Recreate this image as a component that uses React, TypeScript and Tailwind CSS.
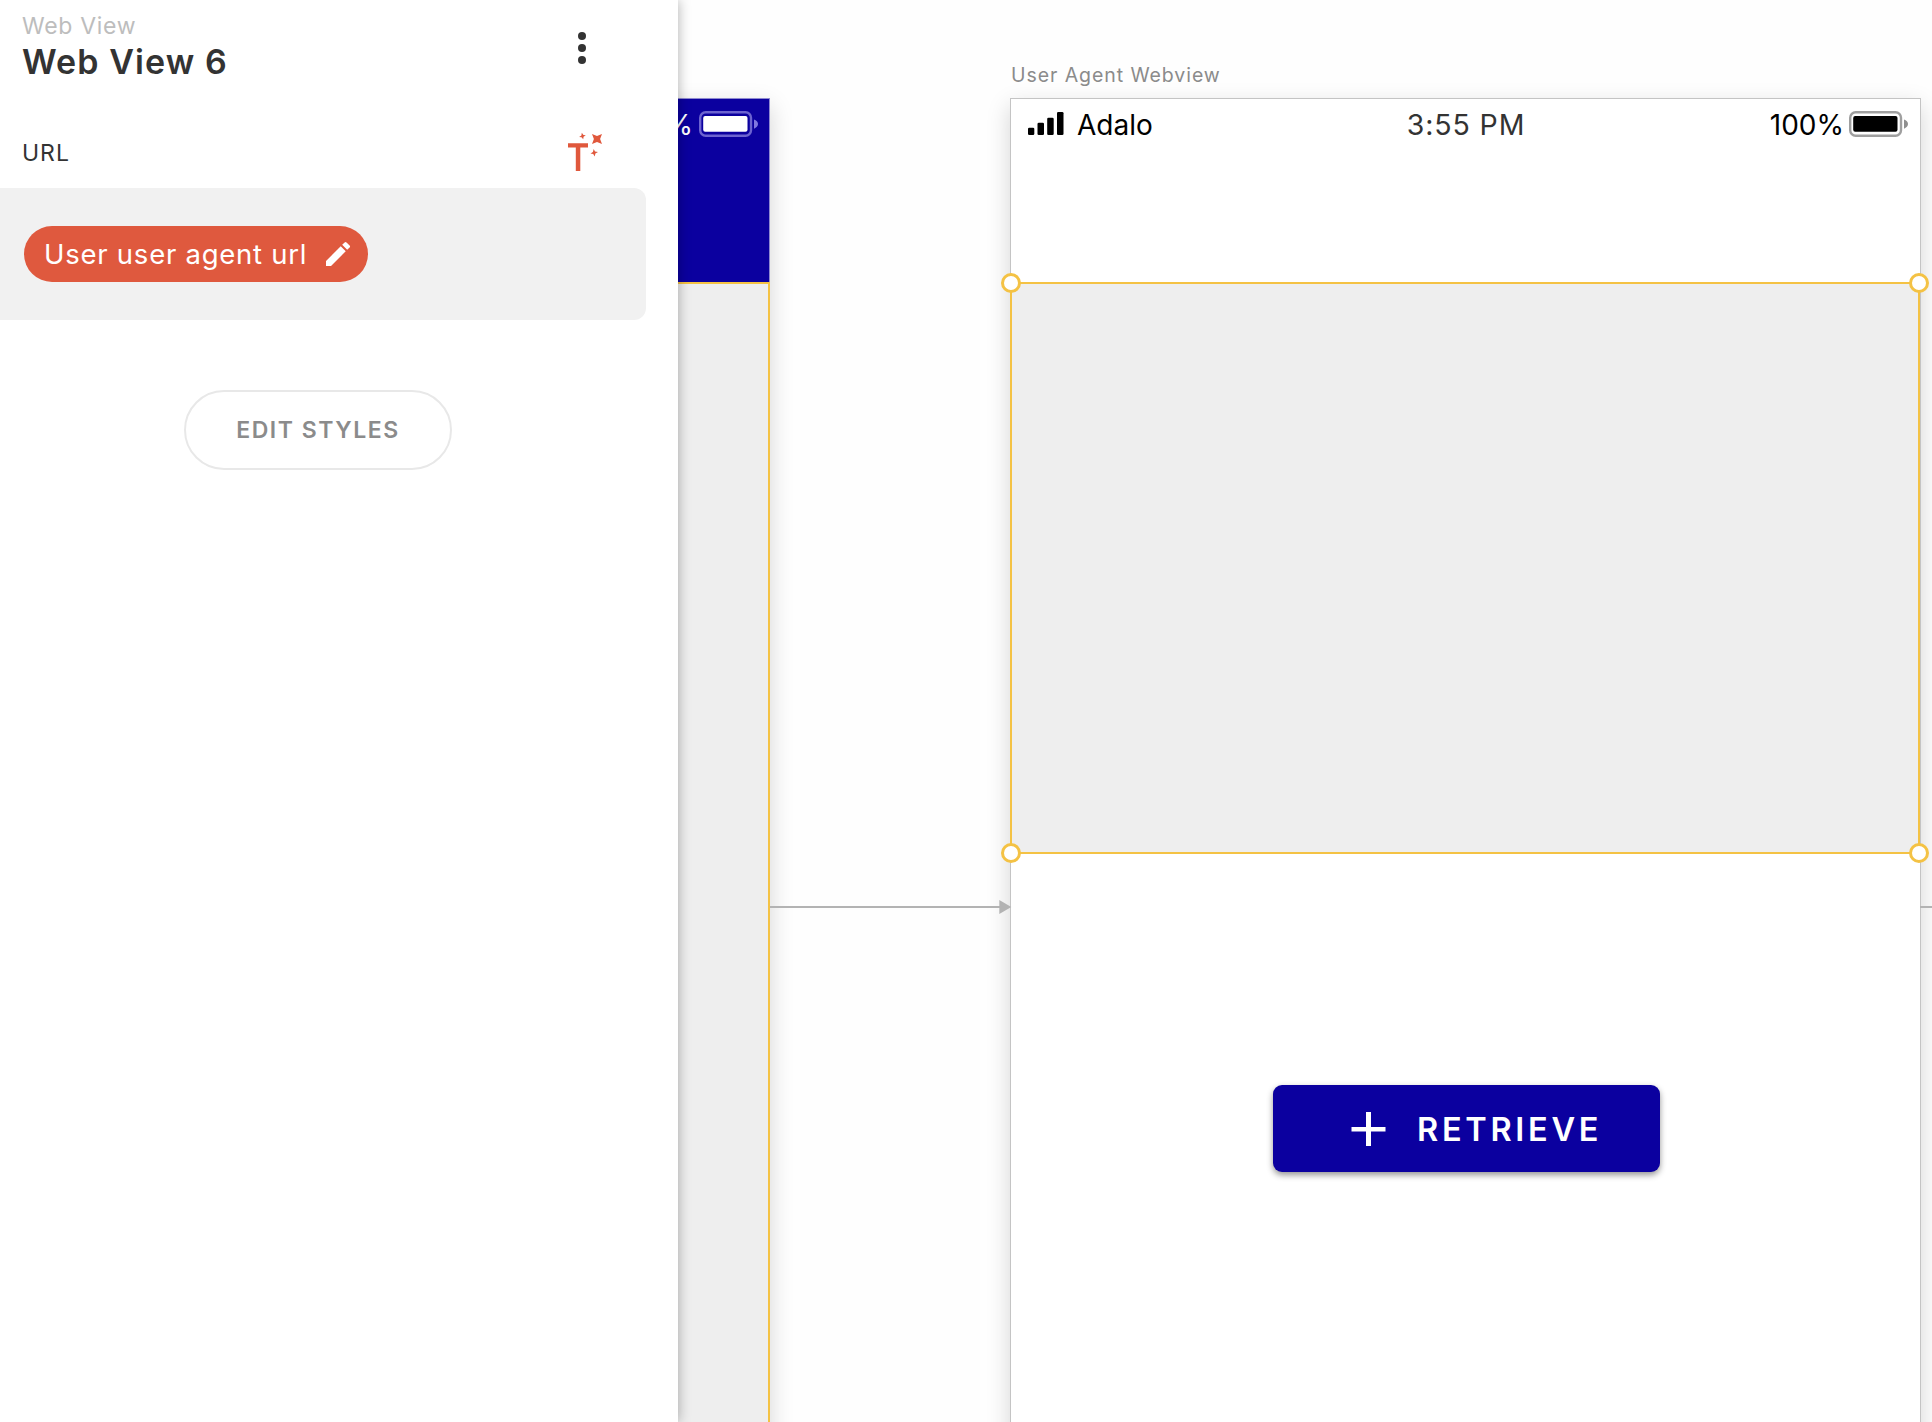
function Battery({ light = false }: { light?: boolean }) {
  const body = light ? "#ffffff" : "#000000";
  const rim = light ? "#6c63d0" : "#9f9f9f";
  const nub = light ? "#8078e0" : "#8f8f8f";
  return (
    <svg className="block shrink-0" width="60" height="26" viewBox="0 0 60 26">
      <rect x="1.2" y="1.2" width="50.8" height="23.6" rx="5.5" fill="none" stroke={rim} strokeWidth="2.4" />
      <rect x="4.2" y="5" width="44.3" height="15.8" rx="2" fill={body} />
      <path d="M55 8.5c2.4.8 4 2.500 4 4.600s-1.600 3.800-4 4.600z" fill={nub} />
    </svg>
  );
}

function Signal() {
  return (
    <svg className="mt-px block shrink-0" width="36" height="24" viewBox="0 0 36 24" fill="#000">
      <rect x="0" y="15.700" width="6.300" height="7.300" rx="1.300" />
      <rect x="9.500" y="10.700" width="6.500" height="12.300" rx="1.300" />
      <rect x="19.200" y="5.700" width="6.500" height="17.300" rx="1.300" />
      <rect x="29" y="0" width="6.500" height="23" rx="1.300" />
    </svg>
  );
}

function MagicText() {
  return (
    <svg className="block" width="36" height="40" viewBox="0 0 36 40" fill="#e0583c">
      <path d="M0 11.300h20v4.200h-7.700V39H7.800V15.500H0z" />
      <path d="M24 2l5 1.900L34 2l-1.900 5 1.900 5-5-1.900-5 1.900 1.900-5z" />
      <path d="M13.800.8l1.700 2.300 2.300.2-2.200 1.500-.4 2.400-1.700-2-2.400-.3 2.300-1.500z" />
      <path d="M25.700 17l1.300 2.600 3 .500-2.600 1.500-.7 2.800-1.500-2.500-2.700-.5 2.400-1.500z" />
    </svg>
  );
}

function Panel() {
  return (
    <aside className="relative z-10 h-full w-[678px] shrink-0 bg-white shadow-[0_0_12px_rgba(0,0,0,0.32)]">
      <header className="flex justify-between pt-[14px] pr-[84px] pl-[22px]">
        <div>
          <div className="text-[23px] leading-6 tracking-[0.700px] text-[#bdbdbd]">Web View</div>
          <h1 className="mt-1 text-[34px] leading-10 font-semibold tracking-[1.100px] text-[#333]">Web View 6</h1>
        </div>
        <svg className="mt-[14px] block" width="24" height="40" viewBox="0 0 24 40" fill="#333">
          <circle cx="12" cy="8" r="4" />
          <circle cx="12" cy="20" r="4" />
          <circle cx="12" cy="32" r="4" />
        </svg>
      </header>
      <div className="mt-[50px] flex h-10 items-center justify-between pr-[74px] pl-[22px]">
        <span className="pt-px text-[23px] leading-7 tracking-[1px] text-[#333]">URL</span>
        <MagicText />
      </div>
      <div className="mt-4 flex h-[132px] w-[646px] items-center rounded-r-[12px] bg-[#f1f1f1] pl-6">
        <div className="flex h-14 w-[344px] items-center justify-between rounded-full bg-[#df593e] pr-[14px] pl-5">
          <span className="text-[27.5px] leading-8 tracking-[0.750px] whitespace-nowrap text-white">User user agent url</span>
          <svg className="block" width="32" height="32" viewBox="0 0 24 24" fill="#fff">
            <path d="M3 17.250V21h3.750L17.810 9.940l-3.750-3.750L3 17.250zM20.710 7.040a.996.996 0 0 0 0-1.410l-2.340-2.340a.996.996 0 0 0-1.410 0l-1.830 1.830 3.750 3.750 1.830-1.830z" />
          </svg>
        </div>
      </div>
      <button className="mt-[70px] ml-[184px] flex h-20 w-[268px] items-center justify-center rounded-full border-2 border-[#e8e8e8] text-[23px] leading-8 font-semibold tracking-[1.55px] text-[#8b8b8b]">
        EDIT STYLES
      </button>
    </aside>
  );
}

function Handle({ place }: { place: string }) {
  return <span className={`absolute size-5 rounded-full border-3 border-[#f4c244] bg-white ${place}`} />;
}

export default function App() {
  return (
    <main className="flex h-[1422px] w-[1932px] overflow-hidden bg-[#fefefe] font-[Inter,sans-serif]">
      <Panel />
      <section className="relative h-full flex-1">
        {/* Screen partly covered by the panel */}
        <div className="absolute top-[98px] -left-[100px] h-[1400px] w-[192px] shadow-[0_8px_22px_rgba(0,0,0,0.17)]">
          <div className="flex h-[184px] items-start justify-end border-t border-r border-[#8f8ad0] bg-[#0b009f] pt-3 pr-[10px]">
            <span className="mt-[2px] mr-[6px] text-[28px] leading-6 text-white">100%</span>
            <Battery light />
          </div>
          <div className="h-[1216px] border-t-2 border-r-2 border-[#f4c244] bg-[#eee]" />
        </div>

        {/* Screen label */}
        <div className="absolute top-[61px] left-[333px] text-[19.500px] leading-7 tracking-[0.930px] whitespace-nowrap text-[#8b8b8b]">
          User Agent Webview
        </div>

        {/* Main screen */}
        <div className="absolute top-[98px] left-[332px] h-[1400px] w-[911px] border border-[#c4c4c4] bg-white shadow-[0_8px_22px_rgba(0,0,0,0.17)]">
          <div className="grid grid-cols-3 items-start pt-3 pr-[11px] pl-[17px]">
            <div className="flex">
              <Signal />
              <span className="ml-[13px] text-[28px] leading-7 text-black">Adalo</span>
            </div>
            <span className="pr-[5px] text-center text-[28.500px] leading-7 tracking-[0.900px] text-[#333]">3:55 PM</span>
            <div className="flex justify-end">
              <span className="mr-[5px] text-[28px] leading-7 text-black">100%</span>
              <Battery />
            </div>
          </div>
          <button className="absolute top-[986px] left-[262px] flex h-[87px] w-[387px] items-center rounded-[9px] bg-[#0b009f] pt-px pl-[78px] text-white shadow-[0_3px_6px_rgba(0,0,0,0.42)]">
            <svg className="block" width="35" height="35" viewBox="0 0 35 35" fill="#fff">
              <path d="M15 0h5v15h14.500v4.500H20V34h-5V19.500H0.500V15H15z" />
            </svg>
            <span className="ml-[31px] pt-px text-[32.500px] leading-10 font-semibold tracking-[3.700px]">RETRIEVE</span>
          </button>
        </div>

        {/* Selected web view */}
        <div className="absolute top-[282px] left-[332px] h-[572px] w-[910px] border-2 border-[#f4c244] bg-[#eee]">
          <Handle place="-top-[11px] -left-[11px]" />
          <Handle place="-top-[11px] -right-[11px]" />
          <Handle place="-bottom-[11px] -left-[11px]" />
          <Handle place="-right-[11px] -bottom-[11px]" />
        </div>

        {/* Links between screens */}
        <svg className="absolute top-[899px] left-[92px] block" width="242" height="16" viewBox="0 0 242 16" fill="#b3b3b3">
          <rect x="0" y="7" width="231" height="2" />
          <path d="M229.300 1l12 7-12 7z" />
        </svg>
        <div className="absolute top-[906px] left-[1242px] h-[2px] w-3 bg-[#b3b3b3]" />
      </section>
    </main>
  );
}
